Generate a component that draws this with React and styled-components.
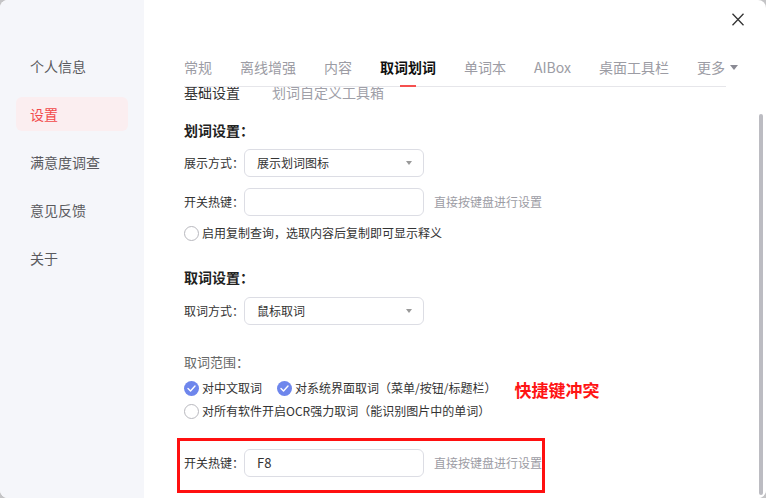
import React, { useLayoutEffect, useRef } from 'react'
import styled, { createGlobalStyle } from 'styled-components'

const GlobalStyle = createGlobalStyle`
  html, body {
    margin: 0;
    padding: 0;
    background: #c4c4c6;
    font-family: "Noto Sans CJK SC", "Noto Sans", sans-serif;
    color: #333;
  }
  * { box-sizing: border-box; }
`

const Dialog = styled.div`
  width: 766px;
  height: 498px;
  display: flex;
  background: #fff;
  border-radius: 8px;
  overflow: hidden;
`

const Sidebar = styled.nav`
  width: 144px;
  flex-shrink: 0;
  background: #f5f6fa;
  padding: 49px 16px 0;
  display: flex;
  flex-direction: column;
  gap: 14px;
`

const SideItem = styled.div`
  height: 34px;
  line-height: 34px;
  padding-left: 14px;
  border-radius: 6px;
  font-size: 14px;
  color: ${p => (p.$active ? '#f24a4a' : '#5a5a5e')};
  background: ${p => (p.$active ? '#fbeef0' : 'transparent')};
`

const Main = styled.section`
  flex: 1;
  min-width: 0;
  display: flex;
  flex-direction: column;
`

const TopBar = styled.div`
  height: 50px;
  flex-shrink: 0;
  display: flex;
  justify-content: flex-end;
  padding: 13px 22px 0 0;
`

const CloseBtn = styled.button`
  width: 12px;
  height: 13px;
  padding: 0;
  border: 0;
  background: none;
  display: flex;
`

const TabBar = styled.div`
  height: 37px;
  flex-shrink: 0;
  margin: 0 40px;
  display: flex;
  gap: 28px;
  border-bottom: 1px solid #e6e6ea;
`

const Tab = styled.div`
  position: relative;
  flex-shrink: 0;
  white-space: nowrap;
  padding-top: 7px;
  font-size: 14px;
  line-height: 20px;
  color: ${p => (p.$active ? '#111' : '#9c9ca4')};
  font-weight: ${p => (p.$active ? 700 : 400)};
  display: flex;
  align-items: flex-start;
  gap: 5px;

  &::after {
    content: '';
    display: ${p => (p.$active ? 'block' : 'none')};
    position: absolute;
    left: 50%;
    bottom: -1px;
    width: 16px;
    height: 2px;
    margin-left: -8px;
    background: #f5504f;
  }
`

const Caret = styled.span`
  width: 0;
  height: 0;
  margin-top: 8px;
  border-left: 4px solid transparent;
  border-right: 4px solid transparent;
  border-top: 5px solid ${p => p.$color || '#8a8a94'};
`

const ScrollArea = styled.div`
  flex: 1 1 0;
  min-height: 0;
  display: flex;
  flex-direction: row;
  background: #fff;
`

const Viewport = styled.div`
  flex: 1 1 0;
  min-width: 0;
  overflow: hidden;
  padding: 25px 0 9px 40px;
`

const Track = styled.div`
  flex: 0 0 7px;
  width: 7px;
  padding-top: 27px;
`

const Thumb = styled.div`
  width: 4px;
  height: 381px;
  border-radius: 2px;
  background: #bcbcc2;
`

const SubTabs = styled.div`
  display: flex;
  gap: 32px;
  font-size: 14px;
  line-height: 18px;
  white-space: nowrap;
`

const SubTab = styled.span`
  color: ${p => (p.$active ? '#333' : '#a0a0a8')};
`

const SectionTitle = styled.div`
  margin-top: ${p => p.$top}px;
  font-size: 14px;
  font-weight: 700;
  line-height: 20px;
  color: #222;
`

const Row = styled.div`
  margin-top: ${p => p.$top}px;
  display: flex;
  align-items: center;
  font-size: 12px;
  line-height: 18px;
  color: #333;
  white-space: nowrap;
`

const Label = styled.span`
  width: 60px;
  flex-shrink: 0;
`

const Field = styled.div`
  width: 180px;
  height: 28px;
  flex-shrink: 0;
  border: 1px solid #dcdde4;
  border-radius: 6px;
  display: flex;
  align-items: center;
  justify-content: space-between;
  padding: 0 11px 0 12px;
  font-size: ${p => (p.$mono ? 13 : 12)}px;
  color: #333;

  ${Caret} {
    margin-top: 0;
    border-left-width: 3px;
    border-right-width: 3px;
    border-top-width: 4px;
  }
`

const Hint = styled.span`
  margin-left: 10px;
  color: #9c9ca4;
`

const Radio = styled.span`
  width: 15px;
  height: 15px;
  flex-shrink: 0;
  border-radius: 50%;
  border: 1px solid #b8b8be;
  margin-right: 3px;
  background: #fff;
`

const Check = styled.span`
  width: 15px;
  height: 15px;
  flex-shrink: 0;
  border-radius: 50%;
  background: #6e86ec;
  margin-right: 3px;
  display: flex;
  align-items: center;
  justify-content: center;
`

const Option = styled.span`
  display: flex;
  align-items: center;
  margin-right: ${p => p.$gap || 0}px;
`

const RangeLabel = styled.div`
  margin-top: 28px;
  font-size: 13px;
  line-height: 18px;
  color: #666;
`

const Conflict = styled.span`
  margin-left: 18px;
  margin-top: 4px;
  font-size: 17px;
  font-weight: 700;
  color: #ff1414;
`

const Highlight = styled.div`
  margin: 18px 0 0 -7px;
  width: 368px;
  border: 3px solid #ff1010;
  padding: 8px 0 13px 4px;
`

const CheckMark = () => (
  <svg width="9" height="7" viewBox="0 0 9 7">
    <path d="M1 3.5 L3.5 6 L8 1" fill="none" stroke="#fff" strokeWidth="1.4" strokeLinecap="round" strokeLinejoin="round" />
  </svg>
)

const tabs = ['常规', '离线增强', '内容', '取词划词', '单词本', 'AIBox', '桌面工具栏']
const menu = ['个人信息', '设置', '满意度调查', '意见反馈', '关于']

export default function App() {
  const viewRef = useRef(null)

  useLayoutEffect(() => {
    if (viewRef.current) viewRef.current.scrollTop = 29
  }, [])

  return (
    <>
      <GlobalStyle />
      <Dialog>
        <Sidebar>
          {menu.map(m => (
            <SideItem key={m} $active={m === '设置'}>{m}</SideItem>
          ))}
        </Sidebar>
        <Main>
          <TopBar>
            <CloseBtn aria-label="关闭">
              <svg width="12" height="13" viewBox="0 0 12 13">
                <path d="M0.5 0.8 L11.5 12.2 M11.5 0.8 L0.5 12.2" stroke="#333" strokeWidth="1.3" />
              </svg>
            </CloseBtn>
          </TopBar>
          <TabBar>
            {tabs.map(t => (
              <Tab key={t} $active={t === '取词划词'}>{t}</Tab>
            ))}
            <Tab>更多<Caret /></Tab>
          </TabBar>
          <ScrollArea>
            <Viewport ref={viewRef}>
              <SubTabs>
                <SubTab $active>基础设置</SubTab>
                <SubTab>划词自定义工具箱</SubTab>
              </SubTabs>

              <SectionTitle $top={19}>划词设置：</SectionTitle>
              <Row $top={9}>
                <Label>展示方式：</Label>
                <Field>展示划词图标<Caret $color="#999" /></Field>
              </Row>
              <Row $top={11}>
                <Label>开关热键：</Label>
                <Field />
                <Hint>直接按键盘进行设置</Hint>
              </Row>
              <Row $top={8}>
                <Radio />启用复制查询，选取内容后复制即可显示释义
              </Row>

              <SectionTitle $top={25}>取词设置：</SectionTitle>
              <Row $top={10}>
                <Label>取词方式：</Label>
                <Field>鼠标取词<Caret $color="#999" /></Field>
              </Row>

              <RangeLabel>取词范围：</RangeLabel>
              <Row $top={6}>
                <Option $gap={15}><Check><CheckMark /></Check>对中文取词</Option>
                <Option><Check><CheckMark /></Check>对系统界面取词（菜单/按钮/标题栏）</Option>
                <Conflict>快捷键冲突</Conflict>
              </Row>
              <Row $top={3}>
                <Radio />对所有软件开启OCR强力取词（能识别图片中的单词）
              </Row>

              <Highlight>
                <Row $top={0}>
                  <Label>开关热键：</Label>
                  <Field $mono>F8</Field>
                  <Hint>直接按键盘进行设置</Hint>
                </Row>
              </Highlight>
            </Viewport>
            <Track aria-hidden="true">
              <Thumb />
            </Track>
          </ScrollArea>
        </Main>
      </Dialog>
    </>
  )
}
